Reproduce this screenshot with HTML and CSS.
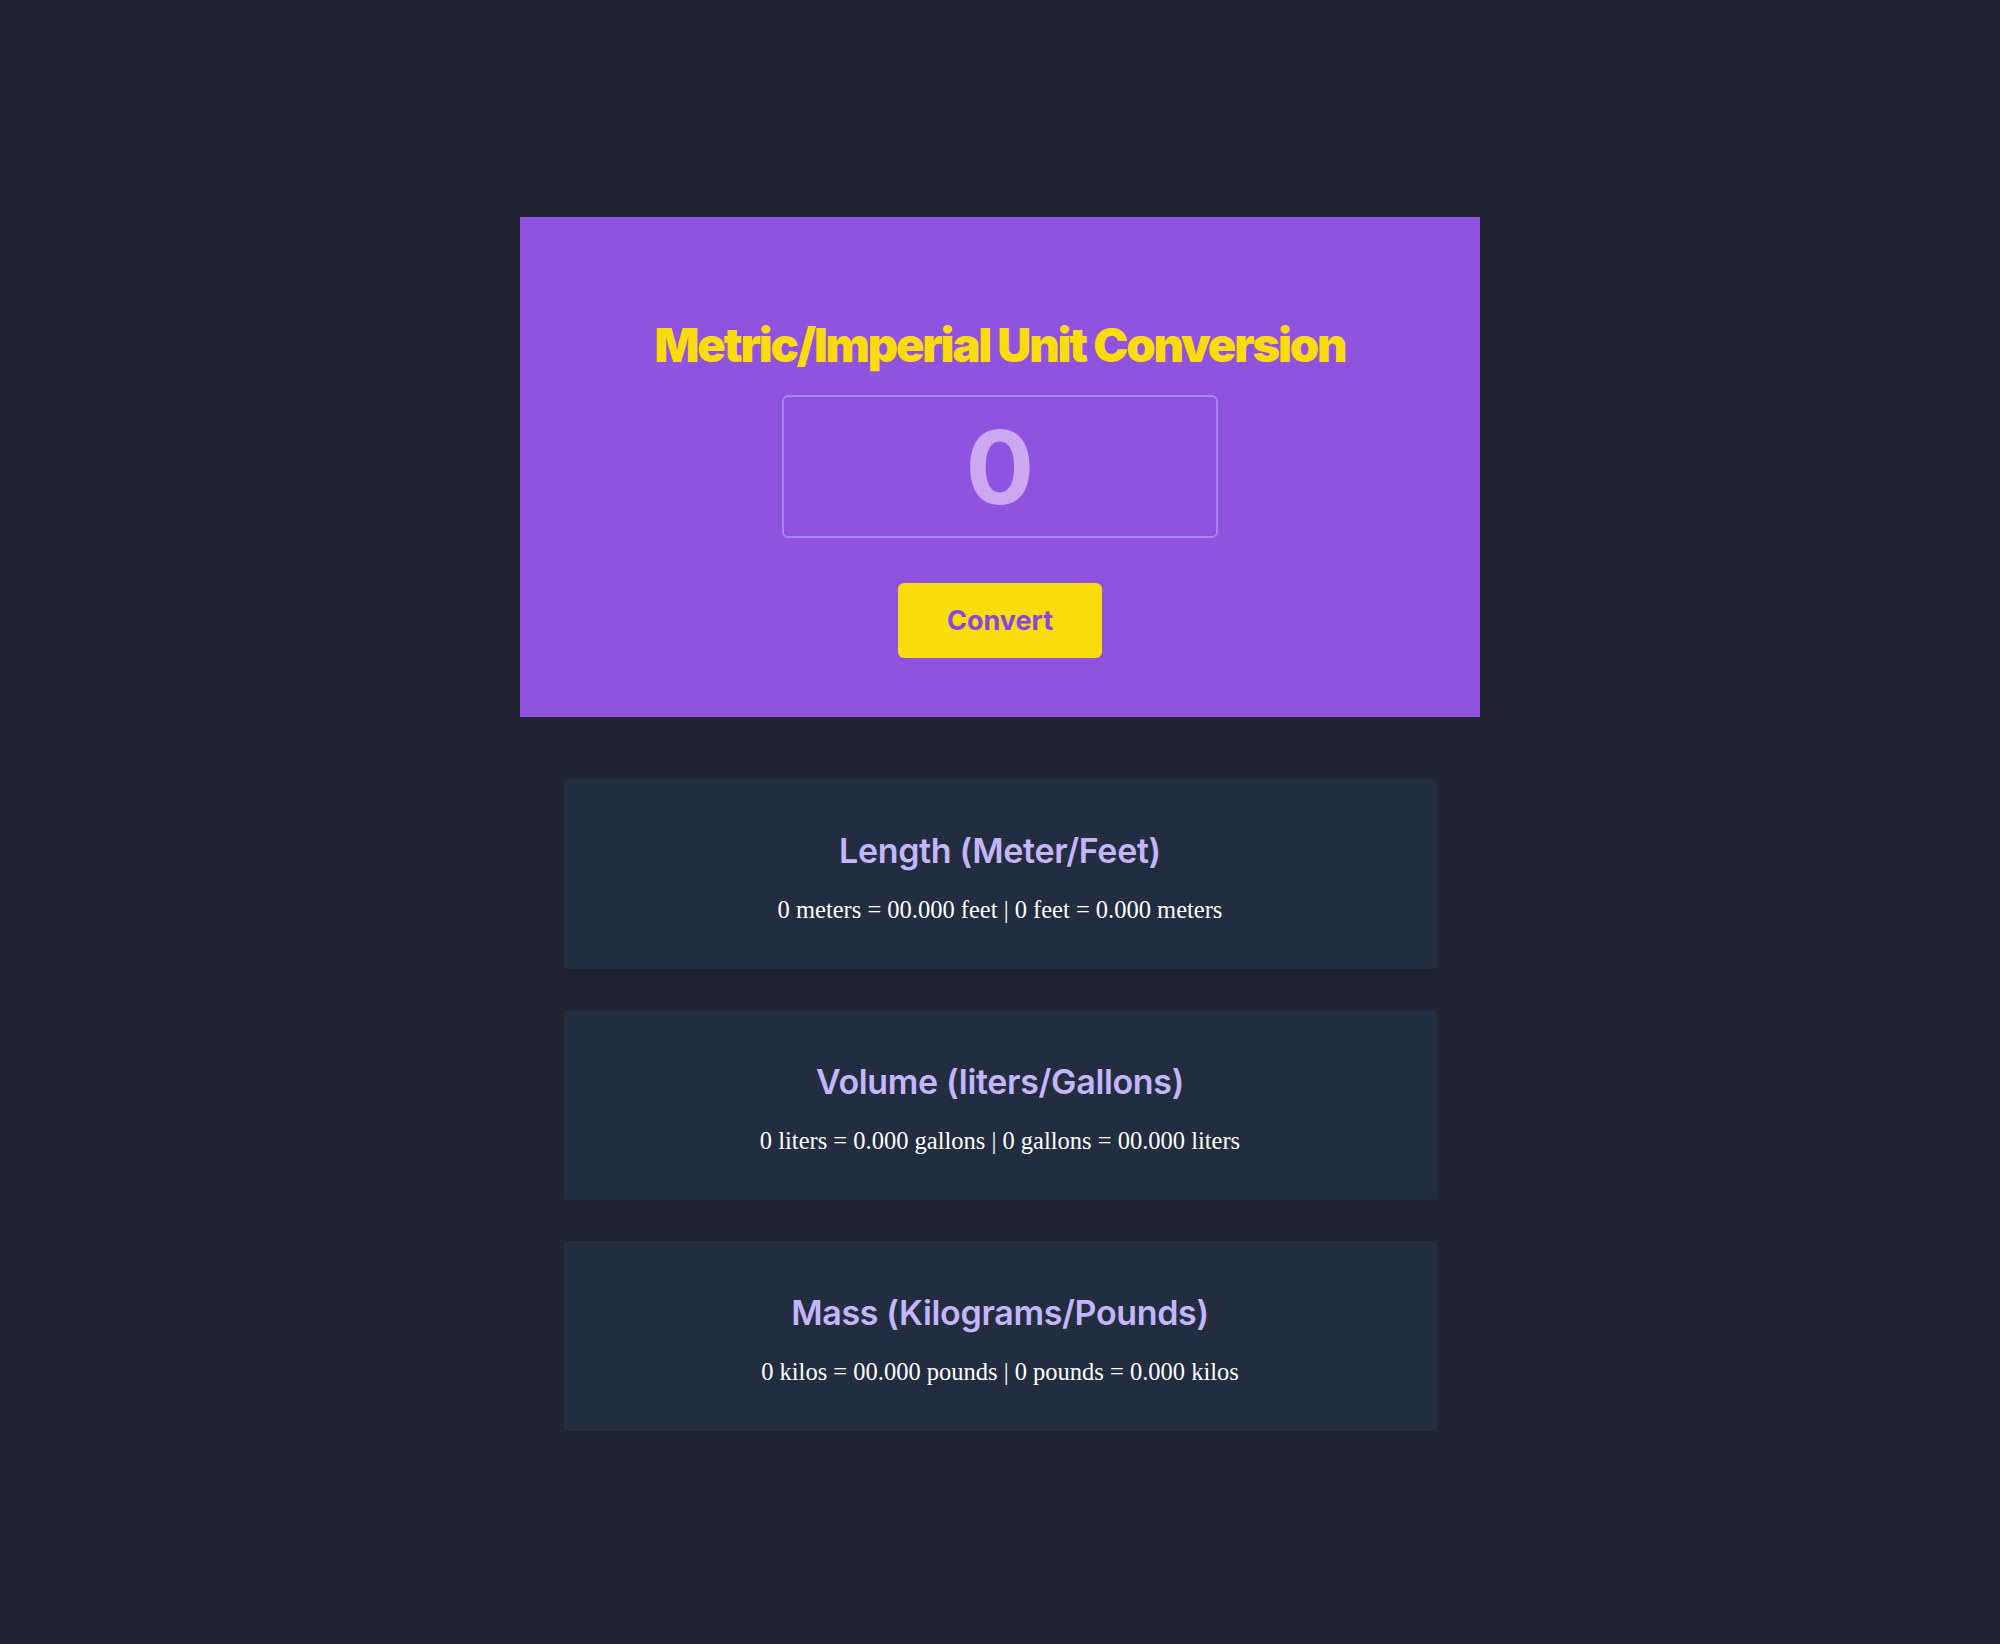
FILE: index.html
```html
<!DOCTYPE html>
<html lang="en">
<head>
<meta charset="utf-8">
<title>Metric/Imperial Unit Conversion</title>
<link rel="stylesheet" href="styles.css">
</head>
<body>
<main class="page">
  <section class="hero">
    <h1 class="hero-title">Metric/Imperial Unit Conversion</h1>
    <input class="hero-input" type="text" placeholder="0">
    <button class="hero-btn" type="button">Convert</button>
  </section>
  <section class="results">
    <div class="card">
      <h2 class="card-title">Length (Meter/Feet)</h2>
      <p class="card-text">0 meters = 00.000 feet | 0 feet = 0.000 meters</p>
    </div>
    <div class="card">
      <h2 class="card-title">Volume (liters/Gallons)</h2>
      <p class="card-text">0 liters = 0.000 gallons | 0 gallons = 00.000 liters</p>
    </div>
    <div class="card">
      <h2 class="card-title">Mass (Kilograms/Pounds)</h2>
      <p class="card-text">0 kilos = 00.000 pounds | 0 pounds = 0.000 kilos</p>
    </div>
  </section>
</main>
</body>
</html>
```

FILE: styles.css
```css
* { box-sizing: border-box; }
html, body { margin: 0; padding: 0; }
body {
  background: #1f2430;
  min-height: 1644px;
  font-family: "Inter", "Liberation Sans", sans-serif;
}
.page {
  width: 960px;
  margin: 0 auto;
  padding-top: 217px;
  display: flex;
  flex-direction: column;
  align-items: center;
}
.hero {
  width: 960px;
  height: 500px;
  background: #8f53df;
  padding-top: 100px;
  display: flex;
  flex-direction: column;
  align-items: center;
}
.hero-title {
  margin: 0;
  font-family: "Inter", sans-serif;
  font-weight: 900;
  font-size: 47px;
  line-height: 56px;
  letter-spacing: -0.045em;
  color: #fadc0c;
}
.hero-input {
  margin-top: 22px;
  width: 436px;
  height: 143px;
  border: 2px solid #a886f6;
  border-radius: 6px;
  background: transparent;
  text-align: center;
  font-family: "Inter", sans-serif;
  font-weight: 700;
  font-size: 102px;
  color: #cba8ef;
  padding: 0;
  outline: none;
}
.hero-input::placeholder { color: #cba8ef; opacity: 1; }
.hero-btn {
  margin-top: 45px;
  width: 204px;
  height: 75px;
  border: none;
  border-radius: 6px;
  background: #f9dc0b;
  color: #8a45e0;
  font-family: "Inter", sans-serif;
  font-weight: 700;
  font-size: 27px;
  cursor: pointer;
}
.results {
  margin-top: 62px;
  display: flex;
  flex-direction: column;
  gap: 41px;
}
.card {
  width: 873px;
  height: 190px;
  background: #222d40;
  border-radius: 4px;
  padding-top: 52px;
  text-align: center;
}
.card-title {
  margin: 0;
  font-family: "Inter", sans-serif;
  font-weight: 600;
  font-size: 34px;
  line-height: 40px;
  color: #c4b5fd;
  letter-spacing: -0.01em;
}
.card-text {
  margin: 25px 0 0;
  font-family: "Liberation Serif", serif;
  font-size: 24.5px;
  line-height: 28px;
  color: #ffffff;
}
```
